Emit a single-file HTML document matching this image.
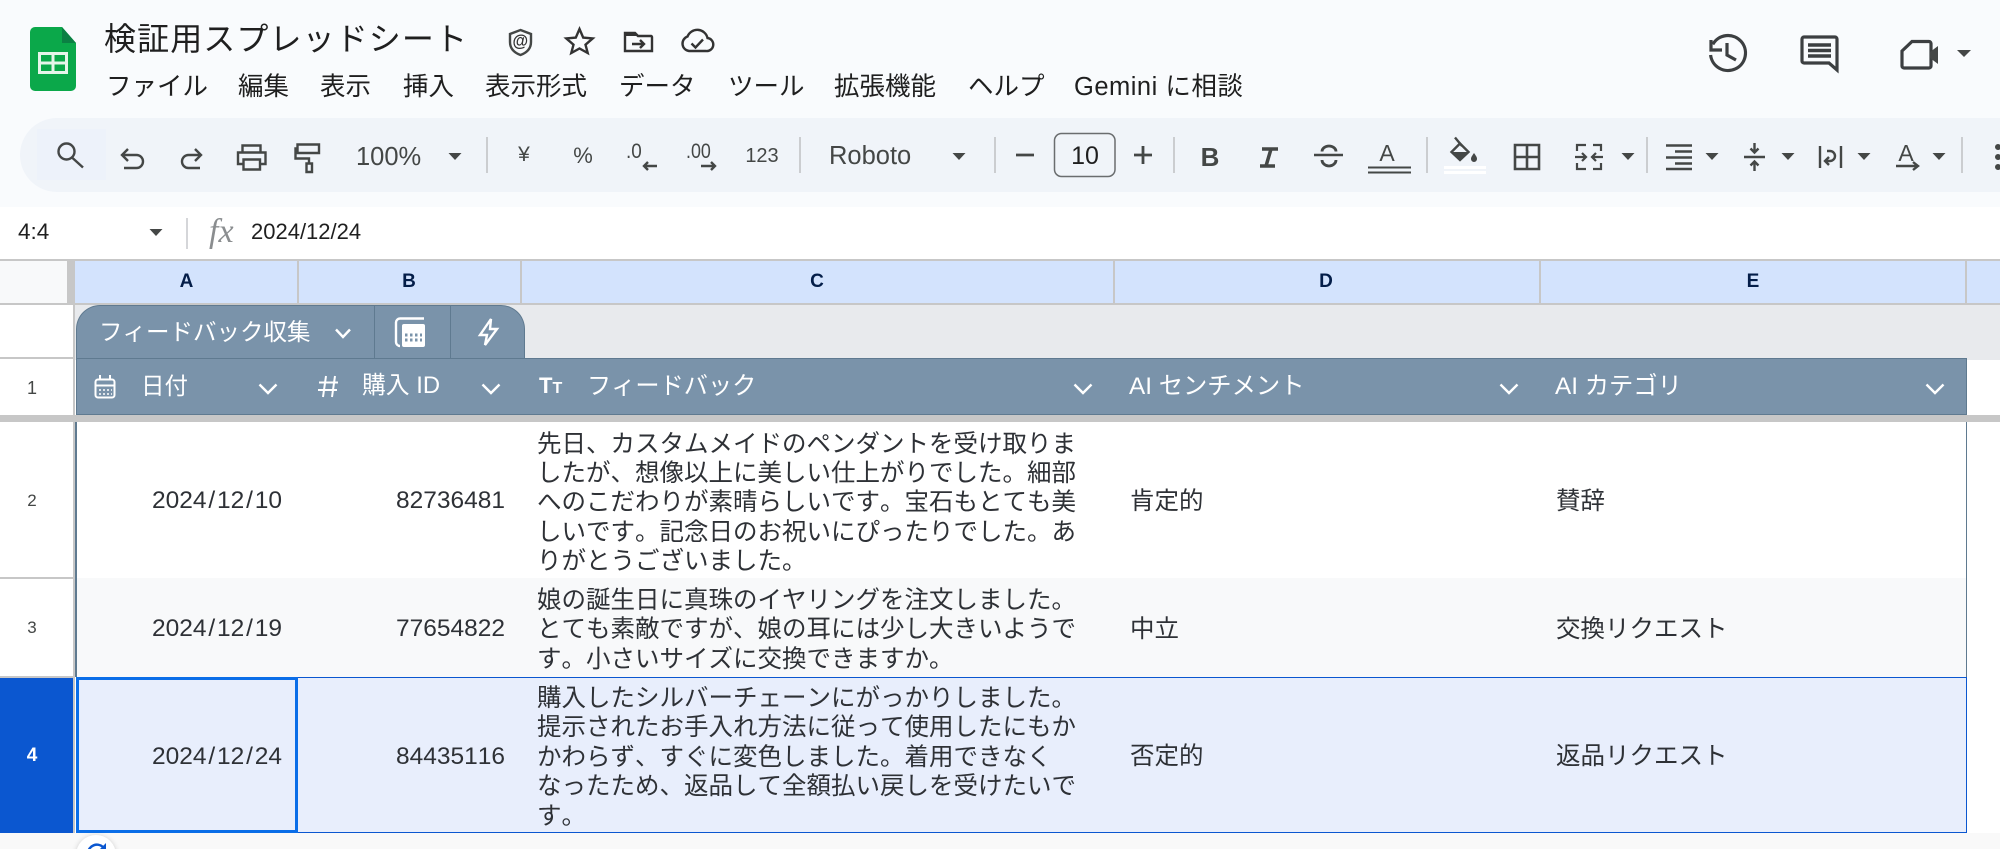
<!DOCTYPE html>
<html lang="ja"><head><meta charset="utf-8"><title>検証用スプレッドシート</title>
<style>
html{margin:0;padding:0;width:2000px;height:849px;overflow:hidden}
body{margin:0;padding:0;width:2000px;height:849px;overflow:hidden;position:relative;background:#f9fbfd;font-family:"Liberation Sans","Noto Sans CJK JP",sans-serif;font-kerning:none}
.b{position:absolute}
.t{position:absolute;white-space:nowrap;line-height:40px;height:40px;color:#1f1f1f}
.c{transform:translateX(-50%)}
.m{font-size:25.5px;top:67px;color:#1f1f1f}
.tb{font-size:20px;color:#444746}
.h{font-size:19px;font-weight:700;color:#041e49;top:262px}
.r{font-size:17px;color:#444746}
.w{color:#fff;font-size:24px}
.d{font-size:24.5px;color:#2e3136}
.l{font-size:24.5px;color:#2e3136;left:537px}
.s{margin:0 1.85px}
svg{position:absolute;left:0;top:0}
.i{fill:none;stroke:#444746;stroke-width:2.4}
.f{fill:#444746;stroke:none}
.x{fill:none;stroke:#fff;stroke-width:2.4}
</style></head><body>
<!-- backgrounds -->
<div class="b" style="left:20px;top:118px;width:2040px;height:74px;border-radius:37px;background:#f0f4f9"></div>
<div class="b" style="left:37px;top:129px;width:69px;height:51px;background:#edf2fa"></div>
<div class="b" style="left:0;top:207px;width:2000px;height:52px;background:#fff"></div>
<div class="b" style="left:0;top:259px;width:2000px;height:2px;background:#c7c7c7"></div>
<div class="b" style="left:0;top:261px;width:67px;height:42px;background:#f8f9fa"></div>
<div class="b" style="left:67px;top:261px;width:8px;height:42px;background:#c7c7c7"></div>
<div class="b" style="left:75px;top:261px;width:1925px;height:42px;background:#d3e3fd"></div>
<div class="b" style="left:0;top:303px;width:2000px;height:2px;background:#c7c7c7"></div>
<div class="b" style="left:297px;top:261px;width:2px;height:42px;background:#c7c7c7"></div>
<div class="b" style="left:520px;top:261px;width:2px;height:42px;background:#c7c7c7"></div>
<div class="b" style="left:1113px;top:261px;width:2px;height:42px;background:#c7c7c7"></div>
<div class="b" style="left:1539px;top:261px;width:2px;height:42px;background:#c7c7c7"></div>
<div class="b" style="left:1965px;top:261px;width:2px;height:42px;background:#c7c7c7"></div>
<div class="b" style="left:0;top:305px;width:2000px;height:528px;background:#fff"></div>
<div class="b" style="left:75px;top:305px;width:1925px;height:55px;background:#e8eaed"></div>
<div class="b" style="left:1967px;top:360px;width:33px;height:54px;background:#fff"></div>
<div class="b" style="left:0;top:357px;width:75px;height:2px;background:#c7c7c7"></div>
<div class="b" style="left:73px;top:305px;width:2px;height:528px;background:#c7c7c7"></div>
<div class="b" style="left:76px;top:305px;width:449px;height:54px;box-sizing:border-box;background:#7a93aa;border-radius:24px 24px 0 0;border:1.5px solid #5f7a90;border-bottom:0"></div>
<div class="b" style="left:373.5px;top:306px;width:1.5px;height:53px;background:#5f7a90"></div>
<div class="b" style="left:449.5px;top:306px;width:1.5px;height:53px;background:#5f7a90"></div>
<div class="b" style="left:76px;top:358px;width:1891px;height:57px;box-sizing:border-box;background:#7a93aa;border:1.5px solid #5f7a90"></div>
<div class="b" style="left:0;top:415px;width:2000px;height:7px;background:#c7c7c7"></div>
<div class="b" style="left:76px;top:578px;width:1890px;height:99px;background:#f8f9fa"></div>
<div class="b" style="left:75px;top:422px;width:1.5px;height:255px;background:#5f7a90"></div>
<div class="b" style="left:1965.5px;top:422px;width:1.5px;height:255px;background:#5f7a90"></div>
<div class="b" style="left:0;top:577px;width:74px;height:2px;background:#c7c7c7"></div>
<div class="b" style="left:0;top:676px;width:74px;height:2px;background:#c7c7c7"></div>
<div class="b" style="left:0;top:678px;width:73px;height:155px;background:#0b57d0"></div>
<div class="b" style="left:76px;top:677px;width:1891px;height:156px;box-sizing:border-box;background:#e8eefc;border:1.5px solid #0b57d0"></div>
<div class="b" style="left:76px;top:677px;width:222px;height:156px;box-sizing:border-box;border:3px solid #0b6ee8"></div>
<div class="b" style="left:0;top:833px;width:2000px;height:16px;background:#f9f9f9"></div>
<div class="b" style="left:76px;top:835px;width:40px;height:40px;border-radius:50%;background:#fff;box-shadow:0 1px 6px rgba(0,0,0,.2)"></div>

<svg width="2000" height="849" viewBox="0 0 2000 849">
<!-- logo -->
<path d="M35 27H62L76 43V86a5 5 0 0 1-5 5H35a5 5 0 0 1-5-5V32a5 5 0 0 1 5-5z" fill="#0ba84a"/>
<path d="M62 27L76 43H62z" fill="#0b8043"/>
<rect x="39.5" y="53.5" width="27" height="19" fill="none" stroke="#e6f5ea" stroke-width="3"/>
<path d="M53 53v19M39 63h28" stroke="#e6f5ea" stroke-width="3"/>
<!-- title icons -->
<path class="i" d="M520.5 30L531 34V42C531 49 526 53 520.5 55C515 53 510 49 510 42V34Z"/>
<path class="i" d="M579.5 29L583.2 37.6 592.7 38.4 585.5 44.7 587.7 53 579.5 48.5 571.3 53 573.5 44.7 566.3 38.4 575.8 37.6Z" style="stroke:#333"/>
<path class="i" d="M625 33H635L638 36H651a1 1 0 0 1 1 1V51H625Z" style="stroke:#333"/>
<path class="f" d="M625 32h10l3 4h-13z" style="fill:#333"/>
<path class="i" d="M632 44H644M640 40L644 44L640 48" style="stroke:#333"/>
<path class="i" d="M689 51h17a6.5 6.5 0 0 0 1.5-13a10.5 10.5 0 0 0-20-1.500a7.500 7.500 0 0 0 1.500 14.500z" style="stroke:#333"/>
<path class="i" d="M691.500 43.500l4 4 7.500-8" style="stroke:#333"/>
<!-- top right -->
<path class="i" style="stroke:#3c3f41;stroke-width:3.200" d="M1712.800 44.300A17.500 17.500 0 1 1 1710.600 55M1711 40V50H1722M1727 43V55L1736 60"/>
<path class="i" style="stroke:#3c3f41;stroke-width:3.200" d="M1804 37H1835a2 2 0 0 1 2 2V70L1829 63H1804a2 2 0 0 1-2-2V39a2 2 0 0 1 2-2z"/>
<path class="i" style="stroke:#3c3f41;stroke-width:3.600" d="M1808 45H1831M1808 50.500H1831M1808 56H1831"/>
<path class="i" style="stroke:#3c3f41;stroke-width:3.200" d="M1912 41.500H1929a2 2 0 0 1 2 2V66a2 2 0 0 1-2 2H1904a2 2 0 0 1-2-2V51Z"/>
<path class="f" d="M1930 52L1938 46V64L1930 58Z"/>
<path class="f" d="M1957 50h14l-7 7z"/>
<!-- toolbar icons -->
<circle class="i" cx="66.500" cy="151.500" r="8"/><path class="i" d="M72 157.500L83 167.500"/>
<path class="i" d="M128 149L122 155L128 161M122 155H136.500a6.500 6.500 0 0 1 0 13H124"/>
<path class="i" d="M195 149L201 155L195 161M201 155H188.500a6.500 6.500 0 0 0 0 13H200"/>
<path class="i" d="M242.500 152V145.500H260.500V152M243 164H238V152.500H265.500V164H260.500M243.500 159.500H260V169.500H243.500Z"/>
<path class="i" d="M297.500 144.500H319V153H297.500ZM297 148.500H295.500V158.500H309V163.500M306.500 163.500H312V172H306.500Z"/>
<path class="i" d="M657 166H644M648 162L644 166L648 170"/>
<path class="i" d="M701 166H715M711 162L715 166L711 170"/>
<path class="f" d="M448.500 153h13l-6.500 7zM952.500 153h13l-6.500 7zM1621.500 153h13l-6.500 7zM1705.500 153h13l-6.500 7zM1781.500 153h13l-6.500 7zM1857.500 153h13l-6.500 7zM1932.500 153h13l-6.500 7z"/>
<path d="M487 137v36M800 137v36M995 137v36M1174 137v36M1427 137v36M1647 137v36M1962 137v36" stroke="#c7c9cc" stroke-width="1.800"/>
<path class="i" style="stroke-width:2.800" d="M1016 155H1034M1134 155H1152M1143 146V164"/>
<rect x="1054.500" y="133.500" width="60.500" height="43" rx="7" fill="none" stroke="#6a6d6f" stroke-width="1.500"/>
<path class="i" style="stroke-width:3.500" d="M1262 149H1278M1260 166H1275M1271 149L1266 166"/>
<path class="i" d="M1314 155H1343"/>
<path class="i" d="M1322 151.500a7 5.500 0 0 1 14 0M1322 160a7 6 0 0 0 14 0" style="stroke-width:2.800"/>
<path class="i" style="stroke-width:2" d="M1368 167.500H1411M1368 172.500H1411"/>
<path class="i" d="M1455 137.500L1462 146"/>
<path class="i" d="M1460 143.500L1468.500 152L1460 160L1451.500 152Z"/>
<path class="f" d="M1451 152H1469L1460 160.500Z"/>
<path class="f" d="M1474 153c-2 3-3 4-3 6a3 3 0 0 0 6 0c0-2-1-3-3-6z"/>
<path d="M1444 167.500H1486M1444 172.500H1486" stroke="#fff" stroke-width="3"/>
<path class="i" style="stroke-width:2.600" d="M1515 145H1539V169H1515ZM1527 145V169M1515 157H1539"/>
<path class="i" style="stroke-width:2.200" d="M1586 145H1577V151M1577 163V169H1586M1593 145H1601V151M1601 163V169H1593M1575 157H1586M1582 153L1586 157L1582 161M1603 157H1592M1596 153L1592 157L1596 161"/>
<path class="i" d="M1666 145.500H1692M1675 151.500H1692M1666 157.500H1692M1675 163.500H1692M1666 169H1692"/>
<path class="i" d="M1744 157H1765M1754.500 143V152.500M1750.500 148.500L1754.500 152.500L1758.500 148.500M1754.500 171V161.500M1750.500 165.500L1754.500 161.500L1758.500 165.500"/>
<path class="i" d="M1820 146V168M1841 146V168M1827 151H1830a5 5 0 0 1 0 10H1825M1829 157L1825 161L1829 165"/>
<path class="i" d="M1896 166H1917M1913 162L1918 166L1913 170"/>
<circle class="f" cx="1998" cy="147" r="3"/><circle class="f" cx="1998" cy="157" r="3"/><circle class="f" cx="1998" cy="167" r="3"/>
<!-- formula -->
<path class="f" d="M149.500 229h13l-6.500 7z"/>
<path d="M187 218v31" stroke="#c7c9cc" stroke-width="1.500"/>
<!-- tab icons -->
<path class="x" d="M343 330.500l7 7.500 7-7.500" transform="translate(-7 -1)"/>
<path class="x" d="M424 318.500H400a4 4 0 0 0-4 4V342a4 4 0 0 0 4 4"/>
<rect x="402" y="324" width="23" height="23" rx="2" fill="#fff"/>
<path d="M405 335h2.500m2.500 0h2.500m2.500 0h2.500m2.500 0h2M405 340h2.500m2.500 0h2.500m2.500 0h2.500m2.500 0h2" stroke="#7a93aa" stroke-width="3"/>
<path class="x" d="M491 319L480 335H487L485 345L497 329H490Z"/>
<!-- header icons -->
<path class="x" style="stroke-width:2" d="M98 379.500H112a2.500 2.500 0 0 1 2.500 2.500V395a2.500 2.500 0 0 1-2.500 2.500H98a2.500 2.500 0 0 1-2.500-2.500V382a2.500 2.500 0 0 1 2.500-2.500ZM96 385.500H114M100 375V380M110 375V380"/>
<path d="M99 390h2m2 0h2m2 0h2m2 0h1M99 394h2m2 0h2m2 0h2m2 0h1" stroke="#fff" stroke-width="1.500"/>
<path class="x" style="stroke-width:2" d="M326 376L323 397M335 376L332 397M319 382.500H338M318 390H337"/>
<path class="x" d="M259.500 384.500l8.500 8.500 8.500-8.500M482.500 384.500l8.500 8.500 8.500-8.500M1074.500 384.500l8.500 8.500 8.500-8.500M1500.500 384.500l8.500 8.500 8.500-8.500M1926.500 384.500l8.500 8.500 8.500-8.500"/>
<!-- reload -->
<path d="M88 853a9 9 0 0 1 15-6l2 2" fill="none" stroke="#0b57d0" stroke-width="2.500"/><path d="M106 843v7h-7z" fill="#0b57d0"/>
</svg>

<!-- title & menu -->
<div class="t" style="left:104px;top:19px;font-size:32px;letter-spacing:1.1px">検証用スプレッドシート</div>
<div class="t" style="left:512.500px;top:22px;font-size:16px;color:#333;font-weight:700;transform:scaleY(1.1)">@</div>
<div class="t m" style="left:106px">ファイル</div>
<div class="t m" style="left:238px">編集</div>
<div class="t m" style="left:320px">表示</div>
<div class="t m" style="left:403px">挿入</div>
<div class="t m" style="left:485px">表示形式</div>
<div class="t m" style="left:619px">データ</div>
<div class="t m" style="left:728px">ツール</div>
<div class="t m" style="left:834px">拡張機能</div>
<div class="t m" style="left:968px">ヘルプ</div>
<div class="t m" style="left:1074px;letter-spacing:.5px">Gemini に相談</div>
<!-- toolbar text -->
<div class="t tb" style="left:356px;top:137px;font-size:25.500px">100%</div>
<div class="t tb c" style="left:524px;top:135px;font-size:21px">¥</div>
<div class="t tb c" style="left:583px;top:136px;font-size:22px">%</div>
<div class="t tb" style="left:626px;top:132px;font-size:21px;transform:scaleX(.9);transform-origin:left">.0</div>
<div class="t tb" style="left:686px;top:132px;font-size:21px;transform:scaleX(.85);transform-origin:left">.00</div>
<div class="t tb c" style="left:762px;top:136px;font-size:20px">123</div>
<div class="t tb" style="left:829px;top:136px;font-size:25.500px">Roboto</div>
<div class="t tb c" style="left:1085px;top:136px;font-size:25px;color:#1f1f1f">10</div>
<div class="t tb c" style="left:1210px;top:137px;font-size:26px;font-weight:700">B</div>
<div class="t tb c" style="left:1387px;top:133px;font-size:23px">A</div>
<div class="t tb c" style="left:1906px;top:133px;font-size:23px">A</div>
<!-- formula bar -->
<div class="t" style="left:18px;top:212px;font-size:22.500px">4:4</div>
<div class="t" style="left:209px;top:212px;font-size:34px;font-family:'Liberation Serif',serif;font-style:italic;color:#8a8d8f">fx</div>
<div class="t" style="left:251px;top:212px;font-size:22px">2024/12/24</div>
<!-- column letters -->
<div class="t h c" style="left:186.500px">A</div>
<div class="t h c" style="left:409px">B</div>
<div class="t h c" style="left:817px">C</div>
<div class="t h c" style="left:1326px">D</div>
<div class="t h c" style="left:1753px">E</div>
<!-- row numbers -->
<div class="t r c" style="left:32px;top:368px;font-size:18px">1</div>
<div class="t r c" style="left:32px;top:481px">2</div>
<div class="t r c" style="left:32px;top:608px">3</div>
<div class="t r c" style="left:32px;top:736px;color:#fff;font-weight:700;font-size:19px">4</div>
<!-- tab + header -->
<div class="t w" style="left:99px;top:312px;font-size:23.500px">フィードバック収集</div>
<div class="t w" style="left:141px;top:366px;font-size:23.500px">日付</div>
<div class="t w" style="left:362px;top:366px;font-size:23.800px">購入 ID</div>
<div class="t w" style="left:539px;top:366px;font-size:22px;font-weight:700">T<span style="font-size:16px">T</span></div>
<div class="t w" style="left:587px;top:367px;font-size:24.200px">フィードバック</div>
<div class="t w" style="left:1129px;top:367px;font-size:24.300px">AI センチメント</div>
<div class="t w" style="left:1555px;top:367px;font-size:24.300px">AI カテゴリ</div>
<!-- rows -->
<div class="t d" style="right:1718px;top:481px">2024<span class="s">/</span>12<span class="s">/</span>10</div>
<div class="t d" style="right:1495px;top:481px">82736481</div>
<div class="t l" style="top:425px">先日、カスタムメイドのペンダントを受け取りま</div>
<div class="t l" style="top:454px">したが、想像以上に美しい仕上がりでした。細部</div>
<div class="t l" style="top:483px">へのこだわりが素晴らしいです。宝石もとても美</div>
<div class="t l" style="top:513px">しいです。記念日のお祝いにぴったりでした。あ</div>
<div class="t l" style="top:542px">りがとうございました。</div>
<div class="t d" style="left:1130px;top:482px">肯定的</div>
<div class="t d" style="left:1556px;top:482px">賛辞</div>

<div class="t d" style="right:1718px;top:609px">2024<span class="s">/</span>12<span class="s">/</span>19</div>
<div class="t d" style="right:1495px;top:609px">77654822</div>
<div class="t l" style="top:581px">娘の誕生日に真珠のイヤリングを注文しました。</div>
<div class="t l" style="top:610px">とても素敵ですが、娘の耳には少し大きいようで</div>
<div class="t l" style="top:640px">す。小さいサイズに交換できますか。</div>
<div class="t d" style="left:1130px;top:610px">中立</div>
<div class="t d" style="left:1556px;top:610px">交換リクエスト</div>

<div class="t d" style="right:1718px;top:737px">2024<span class="s">/</span>12<span class="s">/</span>24</div>
<div class="t d" style="right:1495px;top:737px">84435116</div>
<div class="t l" style="top:679px">購入したシルバーチェーンにがっかりしました。</div>
<div class="t l" style="top:708px">提示されたお手入れ方法に従って使用したにもか</div>
<div class="t l" style="top:738px">かわらず、すぐに変色しました。着用できなく</div>
<div class="t l" style="top:767px">なったため、返品して全額払い戻しを受けたいで</div>
<div class="t l" style="top:797px">す。</div>
<div class="t d" style="left:1130px;top:737px">否定的</div>
<div class="t d" style="left:1556px;top:737px">返品リクエスト</div>
</body></html>
